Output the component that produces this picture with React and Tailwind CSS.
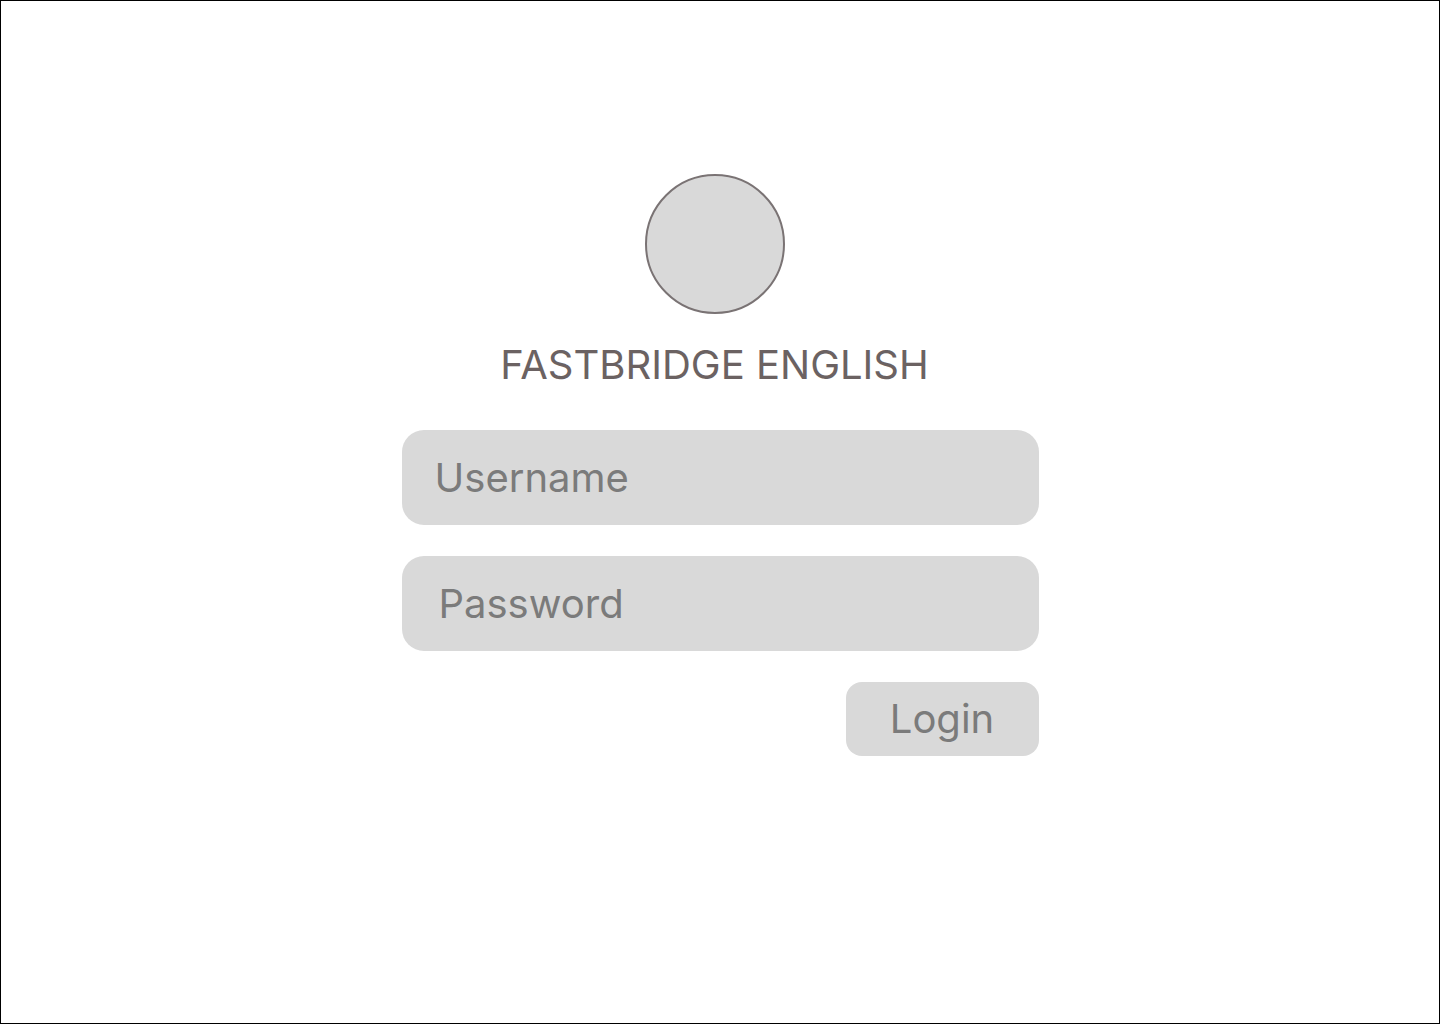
import React from 'react'

const App = () => {
    return (
        <div className="h-[1024px] w-full border border-black bg-white" style={{ fontFamily: "Inter, 'Noto Sans', sans-serif" }}>
            <div className="mx-auto flex w-[637px] flex-col pt-[173px]">

                <div className="flex flex-col items-center pr-[11px]">
                    <div className="h-[140px] w-[140px] rounded-full border-2 border-[#7a7374] bg-[#d9d9d9]" />
                    <div className="mt-[27px] text-[40px] leading-[48px] text-[#6b6262]">
                        FASTBRIDGE ENGLISH
                    </div>
                </div>

                <div className="mt-[41px] flex flex-col gap-[31px]">
                    <input
                        type="text"
                        placeholder="Username"
                        className="h-[95px] w-full rounded-[22px] bg-[#d9d9d9] px-[33px] text-[40px] text-[#6b6b6b] outline-none placeholder:text-[#7b7b7b]"
                    />
                    <input
                        type="password"
                        placeholder="Password"
                        className="h-[95px] w-full rounded-[22px] bg-[#d9d9d9] px-[37px] text-[40px] text-[#6b6b6b] outline-none placeholder:text-[#7b7b7b]"
                    />
                </div>

                <div className="mt-[31px] flex justify-end">
                    <button className="h-[74px] w-[193px] rounded-[16px] bg-[#d9d9d9] text-[40px] text-[#7b7b7b]">
                        Login
                    </button>
                </div>
            </div>
        </div>
    )
}

export default App
